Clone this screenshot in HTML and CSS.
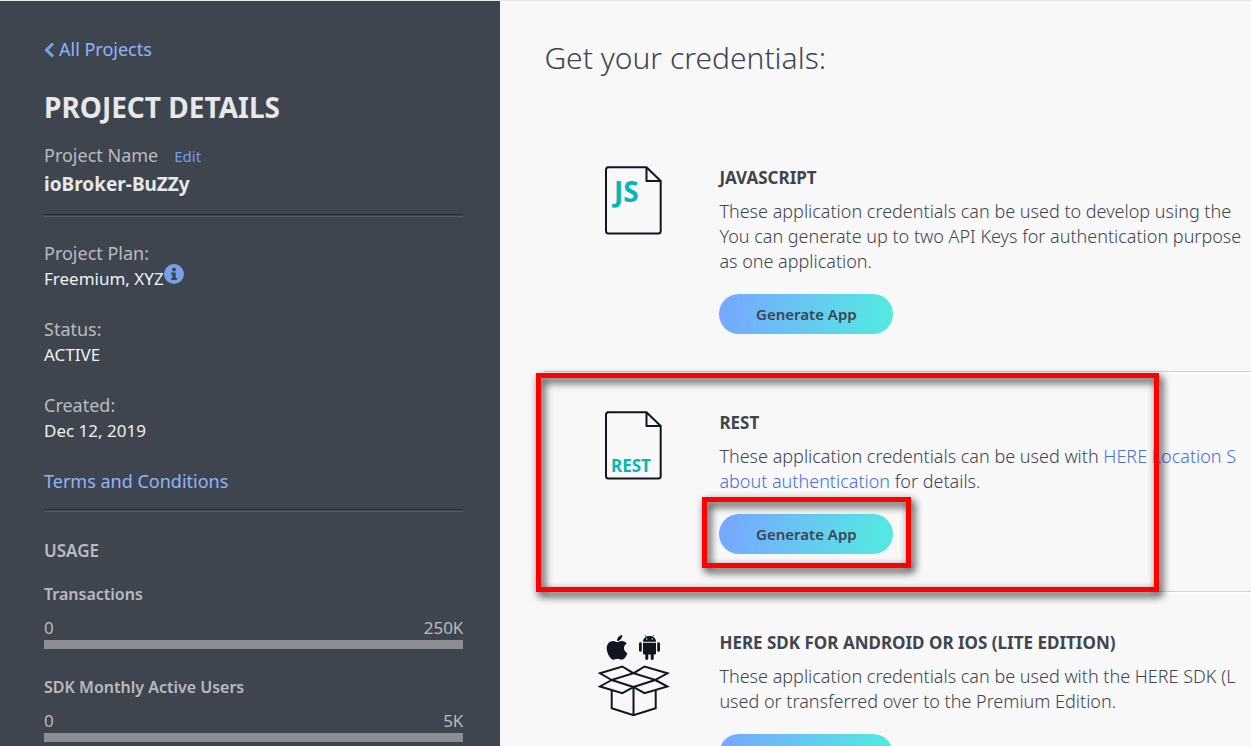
FILE: index.html
```html
<!DOCTYPE html>
<html lang="en">
<head>
<meta charset="utf-8">
<title>Project Details</title>
<link rel="stylesheet" href="styles.css">
</head>
<body>
<div class="page">
  <aside class="sidebar">
    <a class="back" href="#">
      <svg class="back-icon" width="11" height="16" viewBox="0 0 11 16" aria-hidden="true"><path d="M9 1.500 2.500 8 9 14.500"/></svg>
      All Projects
    </a>
    <h1 class="sidebar-title">PROJECT DETAILS</h1>
    <div class="name-row"><span class="label">Project Name</span><a class="edit" href="#">Edit</a></div>
    <div class="project-name">ioBroker-BuZZy</div>
    <hr class="rule">
    <dl class="facts">
      <div class="fact">
        <dt class="label">Project Plan:</dt>
        <dd class="value value-info">Freemium, XYZ
          <svg class="info" width="20" height="20" viewBox="0 0 20 20" role="img" aria-label="Info"><circle cx="10" cy="10" r="10" fill="#76a1ea"/><circle cx="10" cy="5.600" r="2" fill="#3f454f"/><path fill="#3f454f" d="M7 8.500h4.700v5.500h1.300v2H7v-2h1.400v-3.500H7z"/></svg>
        </dd>
      </div>
      <div class="fact"><dt class="label">Status:</dt><dd class="value">ACTIVE</dd></div>
      <div class="fact"><dt class="label">Created:</dt><dd class="value">Dec 12, 2019</dd></div>
    </dl>
    <a class="terms" href="#">Terms and Conditions</a>
    <hr class="rule">
    <h2 class="usage-title">USAGE</h2>
    <section class="meter">
      <h3 class="meter-title">Transactions</h3>
      <div class="meter-range"><span>0</span><span>250K</span></div>
      <div class="meter-bar"></div>
    </section>
    <section class="meter">
      <h3 class="meter-title">SDK Monthly Active Users</h3>
      <div class="meter-range"><span>0</span><span>5K</span></div>
      <div class="meter-bar"></div>
    </section>
  </aside>

  <main class="main">
    <h1 class="main-title">Get your credentials:</h1>

    <section class="card">
      <svg class="card-icon" width="72" height="88" viewBox="0 0 72 88" aria-hidden="true">
        <path class="doc" d="M9 1.200h39.500L62.700 15v50a2.500 2.500 0 0 1-2.500 2.500H10.500A2.500 2.500 0 0 1 8 65V3.700a2.500 2.500 0 0 1 2.500-2.500M48.500 1.200V15h14.200"/>
        <text class="doc-text doc-js" x="16" y="36">JS</text>
      </svg>
      <div class="card-body">
        <h2 class="card-title">JAVASCRIPT</h2>
        <p class="card-text">These application credentials can be used to develop using the<br>You can generate up to two API Keys for authentication purpose<br>as one application.</p>
        <button class="generate" type="button">Generate App</button>
      </div>
    </section>

    <section class="card">
      <svg class="card-icon" width="72" height="88" viewBox="0 0 72 88" aria-hidden="true">
        <path class="doc" d="M9 1.200h39.500L62.700 15v50a2.500 2.500 0 0 1-2.500 2.500H10.500A2.500 2.500 0 0 1 8 65V3.700a2.500 2.500 0 0 1 2.500-2.500M48.500 1.200V15h14.200"/>
        <text class="doc-text doc-rest" x="13" y="61">REST</text>
      </svg>
      <div class="card-body">
        <h2 class="card-title">REST</h2>
        <p class="card-text">These application credentials can be used with <a class="link" href="#">HERE Location S</a><br><a class="link" href="#">about authentication</a> for details.</p>
        <div class="action">
          <button class="generate" type="button">Generate App</button>
          <div class="mark mark-button"></div>
        </div>
      </div>
      <div class="mark mark-card"></div>
    </section>

    <section class="card">
      <svg class="card-icon" width="72" height="88" viewBox="0 0 72 88" aria-hidden="true">
        <path fill="#0f1621" transform="translate(8.500 2.300) scale(.055)" d="M318.700 268.700c-.2-36.700 16.400-64.400 50-84.800-18.800-26.900-47.200-41.700-84.700-44.600-35.500-2.800-74.300 20.700-88.500 20.700-15 0-49.400-19.700-76.400-19.700C63.300 141.200 4 184.800 4 273.500q0 39.300 14.400 81.200c12.800 36.700 59 126.700 107.200 125.200 25.200-.6 43-17.900 75.800-17.900 31.800 0 48.300 17.900 76.400 17.900 48.600-.7 90.400-82.500 102.600-119.300-65.200-30.700-61.700-90-61.700-91.900zm-56.600-164.200c27.300-32.400 24.800-61.900 24-72.500-24.100 1.400-52 16.400-67.900 34.900-17.500 19.800-27.800 44.300-25.600 71.900 26.100 2 49.900-11.400 69.500-34.300z"/>
        <g fill="#0f1621">
          <path d="M45 10.700c0-3 2.500-5.700 6.500-5.700s6.500 2.700 6.500 5.700z"/>
          <path d="M45 11.700h13v10.600a1.200 1.200 0 0 1-1.200 1.200H46.200a1.200 1.200 0 0 1-1.200-1.200z"/>
          <rect x="41" y="11.300" width="2.800" height="9.500" rx="1.400"/>
          <rect x="59.200" y="11.300" width="2.800" height="9.500" rx="1.400"/>
          <rect x="47.300" y="21" width="3" height="8" rx="1.400"/>
          <rect x="52.700" y="21" width="3" height="8" rx="1.400"/>
          <path d="m47 4 1.500 2M56 4l-1.500 2" stroke="#0f1621" stroke-width=".7"/>
          <circle cx="48.700" cy="8" r=".7" fill="#f8f8f8"/><circle cx="54.300" cy="8" r=".7" fill="#f8f8f8"/>
        </g>
        <path class="box" d="M2 42.300 24.300 35.500 35.500 42.300 13.700 49zM69.500 42.300 46.500 35.500 35.500 42.300 57.300 49zM13.700 49 2 55.500 24.300 62.200 35.500 56zM57.300 49 69.500 55.500 46.500 62.200 35.500 56zM13.700 59.500V77.300L35.500 84.200 57.700 77.300V59.500M35.500 56V84.200M13.700 49 35.500 56 57.300 49"/>
      </svg>
      <div class="card-body">
        <h2 class="card-title">HERE SDK FOR ANDROID OR IOS (LITE EDITION)</h2>
        <p class="card-text">These application credentials can be used with the HERE SDK (L<br>used or transferred over to the Premium Edition.</p>
        <button class="generate" type="button">Generate App</button>
      </div>
    </section>
  </main>
</div>
</body>
</html>
```

FILE: styles.css
```css
* { box-sizing: border-box; }

body,
h1, h2, h3, p, dl, dd { margin: 0; }

body {
  font-family: "Noto Sans", "Open Sans", sans-serif;
  font-size: 18px;
  line-height: 25px;
  color: #3f454f;
  background: #f8f8f8;
}

a { text-decoration: none; }

.page {
  display: flex;
  height: 100vh;
  overflow: hidden;
  border-top: 1px solid #e6e8e8;
}

/* Sidebar */
.sidebar {
  flex: 0 0 40%;
  padding: 36px 37px 0 44px;
  color: #b8bbc0;
  background: #3f454f;
}

.back {
  display: flex;
  align-items: center;
  gap: 4px;
  color: #8fb5fb;
}

.back-icon {
  fill: none;
  stroke: #76a1ea;
  stroke-width: 3;
}

.sidebar-title {
  margin-top: 27px;
  font-size: 28px;
  line-height: 36px;
  font-weight: 700;
  color: #e6e8ea;
}

.name-row {
  display: flex;
  align-items: baseline;
  gap: 16px;
  margin-top: 18px;
}

.edit {
  font-size: 15px;
  color: #6f9cea;
}

.project-name {
  margin-top: 2px;
  font-size: 19px;
  line-height: 26px;
  font-weight: 700;
  color: #e6e8ea;
}

.rule {
  height: 3px;
  margin: 17px 0 0;
  border: 0;
  border-top: 1px solid #272d37;
  border-bottom: 1px solid #565c66;
}

.facts {
  display: grid;
  gap: 26px;
  margin: 24px 0 26px;
}

.value {
  font-size: 17px;
  color: #f0f1f2;
}

.value-info {
  display: flex;
  align-items: flex-start;
}

.info { margin-top: -2px; }

.terms {
  display: block;
  color: #8fb5fb;
}

.terms + .rule { margin-top: 15px; }

.usage-title {
  margin-top: 26px;
  font-size: 17px;
  line-height: 25px;
  font-weight: 600;
}

.meter { margin-top: 26px; }
.usage-title + .meter { margin-top: 19px; }

.meter-title {
  font-size: 16px;
  line-height: 25px;
  font-weight: 600;
}

.meter-range {
  display: flex;
  justify-content: space-between;
  margin-top: 8px;
  font-size: 17px;
}

.meter-bar {
  height: 9px;
  background: #8b8e95;
}

/* Credentials */
.main {
  flex: 1;
  min-width: 0;
  padding: 39px 0 0 44px;
}

.main-title {
  margin-bottom: 53px;
  font-size: 30px;
  line-height: 36px;
  font-weight: 300;
}

.card {
  position: relative;
  display: flex;
  gap: 49px;
  padding: 37px 0 37px 54px;
}

.card + .card {
  border-top: 1px solid #d0d2d3;
  box-shadow: inset 0 2px 0 #ffffff;
  padding-top: 39px;
}

.card-icon { flex: none; }

.doc,
.box {
  fill: none;
  stroke: #0f1621;
  stroke-width: 2;
  stroke-linejoin: round;
}

.box {
  stroke-linejoin: miter;
}

.doc-text {
  font-weight: 700;
  fill: #06b6b2;
}

.doc-js { font-size: 28px; }
.doc-rest { font-size: 17px; }

.card-title {
  font-size: 17px;
  line-height: 24px;
  font-weight: 700;
}

.card-text {
  margin: 9px 0 20px;
  font-weight: 300;
  white-space: nowrap;
}

.link { color: #4a6fd8; }

.generate {
  display: block;
  width: 174px;
  height: 40px;
  padding: 0;
  border: 0;
  border-radius: 20px;
  font-family: inherit;
  font-size: 15px;
  font-weight: 600;
  color: #3f454f;
  background: linear-gradient(100deg, #76a9ff 5%, #54e8e1 95%);
}

.action {
  position: relative;
  width: 174px;
}

/* Red highlight frames laid over the content */
.mark {
  position: absolute;
  z-index: 1;
  border: 5px solid #ff0000;
  filter: drop-shadow(3px 4px 4px rgba(0, 0, 0, 0.9));
  pointer-events: none;
}

.mark-card {
  top: 1px;
  left: -8px;
  width: 623px;
  height: 219px;
}

.mark-button { inset: -17px -18px -14px -17px; }
```
